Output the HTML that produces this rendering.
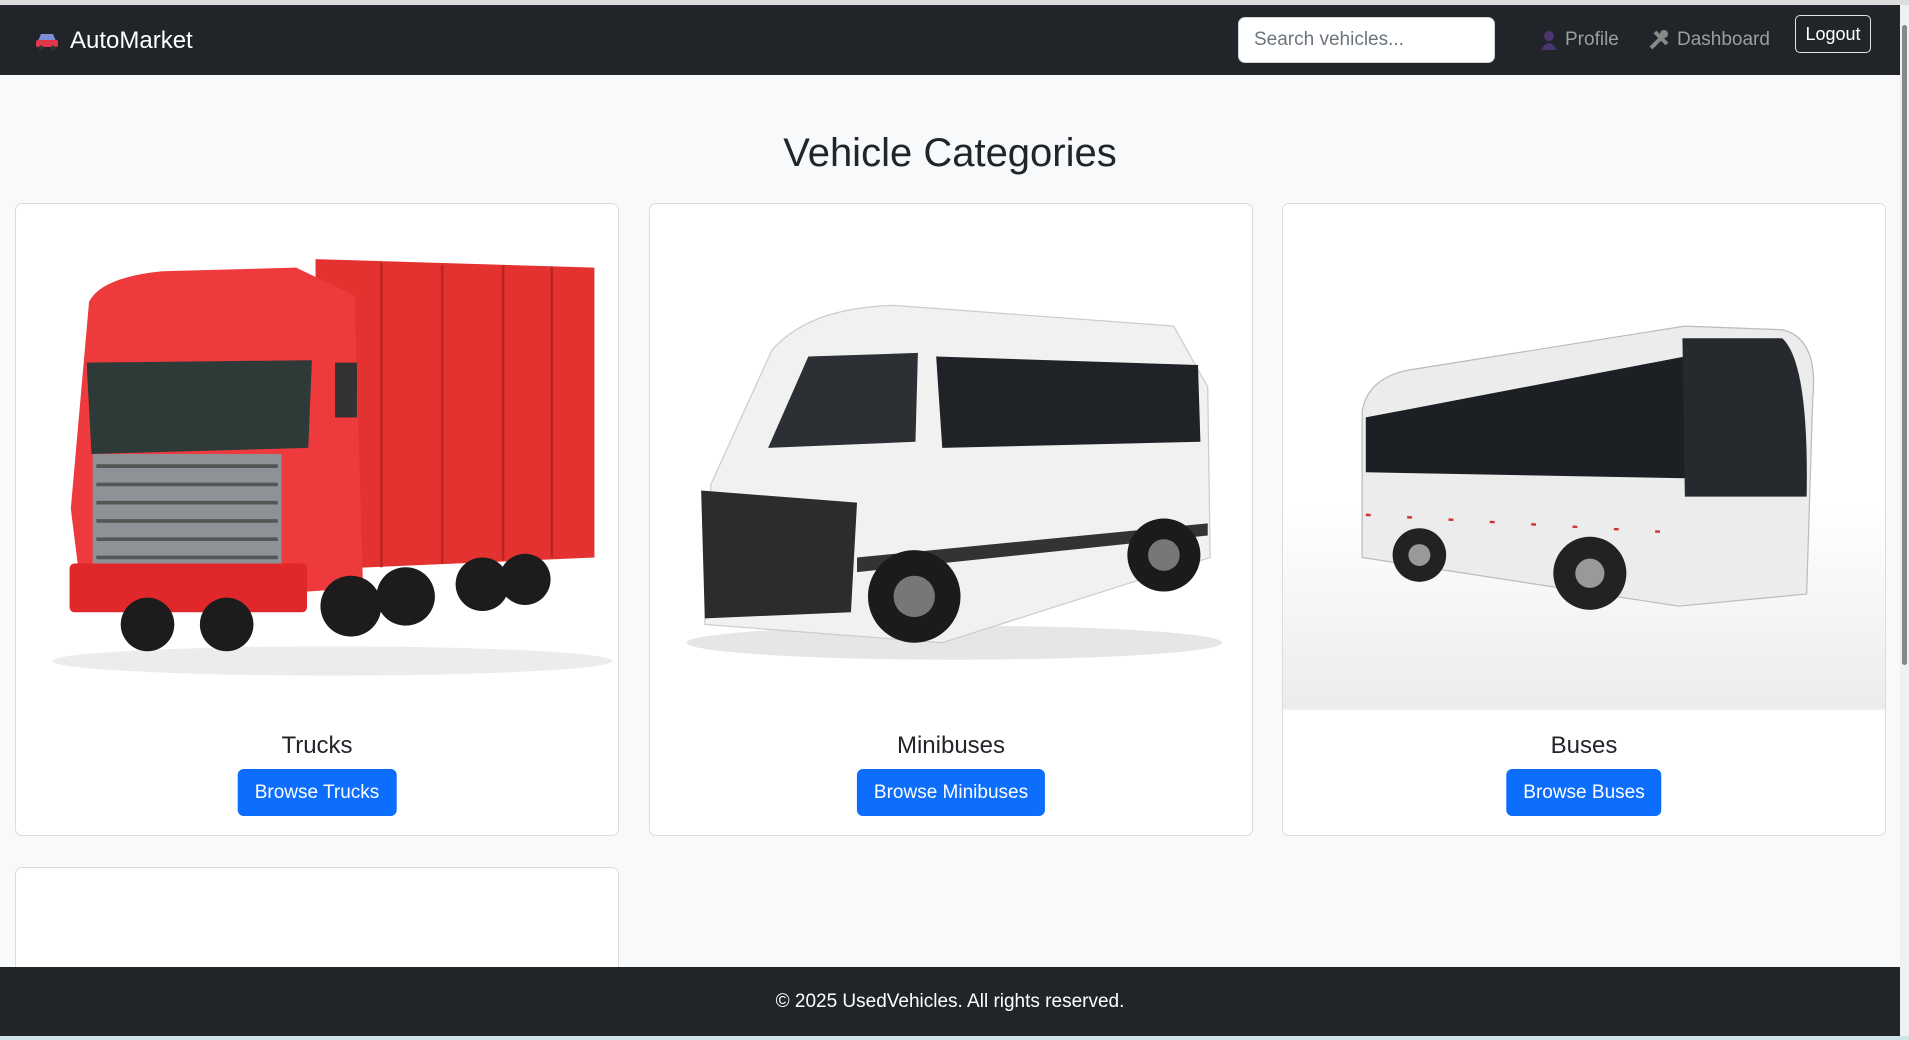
<!DOCTYPE html>
<html><head><meta charset="utf-8"><style>
*{box-sizing:border-box;margin:0;padding:0}
html,body{width:1909px;height:1040px;overflow:hidden;background:#f8f9fa;font-family:"Liberation Sans",sans-serif;color:#212529}
#wrap{position:relative;width:1909px;height:1040px;overflow:hidden}
.top{position:absolute;left:0;top:0;width:1909px;height:5px;background:#dcdcdc}
.nav{position:absolute;left:0;top:5px;width:1900px;height:70px;background:#212529}
.brand{position:absolute;left:34px;top:22px;color:#fff;font-size:24px;display:flex;align-items:center;gap:10px}
.search{position:absolute;left:1238px;top:12px;width:257px;height:46px;background:#fff;border-radius:7px;border:1px solid #ced4da;font-size:19px;color:#6c757d;padding:11px 15px}
.link{position:absolute;top:24px;color:#9a9da1;font-size:19px;display:flex;align-items:center;gap:7px}
.logout{position:absolute;left:1795px;top:10px;width:76px;height:38px;border:1px solid #dee2e6;border-radius:5px;color:#fff;font-size:18px;text-align:center;line-height:36px}
h1{position:absolute;left:0;width:1900px;top:131px;text-align:center;font-size:40px;font-weight:500}
.card{position:absolute;top:203px;width:604px;height:633px;background:#fff;border:1px solid #dadcdf;border-radius:7px;overflow:hidden}
.card svg{position:absolute;left:0;top:0}
.ct{position:absolute;top:528px;width:100%;text-align:center;font-size:24px;font-weight:500}
.btn{position:absolute;top:565px;left:50%;transform:translateX(-50%);background:#0d6efd;color:#fff;font-size:19px;height:47px;line-height:47px;padding:0 17px;border-radius:6px;white-space:nowrap}
.foot{position:absolute;left:0;top:967px;width:1900px;height:69px;background:#212529;color:#fff;font-size:19px;text-align:center;line-height:69px}
.sb{position:absolute;left:1900px;top:5px;width:9px;height:1031px;background:#f0f0f0}
.sb div{position:absolute;left:2px;top:20px;width:5px;height:640px;background:#888;border-radius:3px}
.task{position:absolute;left:0;top:1036px;width:1909px;height:4px;background:#cfe3e8}
</style></head><body><div id="wrap">
<div class="top"></div>
<div class="nav">
<div class="brand"><svg width="26" height="20" viewBox="0 0 26 20"><path d="M4 10 L7 3 H19 L22 10 Z" fill="#7b8fd6"/><rect x="2" y="9" width="22" height="7" rx="2" fill="#e2364a"/><circle cx="7" cy="17" r="2.5" fill="#333"/><circle cx="19" cy="17" r="2.5" fill="#333"/></svg>AutoMarket</div>
<div class="search">Search vehicles...</div>
<div class="link" style="left:1540px"><svg width="18" height="20" viewBox="0 0 18 20"><circle cx="9" cy="6" r="5" fill="#4a3570"/><path d="M1 20 Q9 6 17 20Z" fill="#4a3570"/></svg>Profile</div>
<div class="link" style="left:1648px"><svg width="22" height="22" viewBox="0 0 22 22"><path d="M3 19 L15 7 M7 3 L19 15" stroke="#888" stroke-width="4"/><circle cx="16" cy="5" r="4" fill="#888"/></svg>Dashboard</div>
<div class="logout">Logout</div>
</div>
<h1>Vehicle Categories</h1>

<div class="card" style="left:15px">
<svg width="604" height="506" viewBox="0 0 496 415">
<ellipse cx="260" cy="375" rx="230" ry="12" fill="#ececec"/>
<path d="M246 45 L475 52 L475 290 L246 300Z" fill="#e3322f"/>
<path d="M300 48 V298 M350 50 V295 M400 50 V292 M440 51 V290" stroke="#b82420" stroke-width="2"/>
<path d="M60 80 Q70 60 120 55 L230 52 L278 75 L285 315 L55 330 L45 250 Z" fill="#ee3a3c"/>
<path d="M58 130 L243 128 L240 200 L62 205 Z" fill="#2d3a38"/>
<rect x="63" y="205" width="155" height="95" fill="#8e9297"/>
<path d="M66 215H215M66 230H215M66 245H215M66 260H215M66 275H215M66 290H215" stroke="#555" stroke-width="3"/>
<rect x="44" y="295" width="195" height="40" rx="4" fill="#e0272a"/>
<rect x="262" y="130" width="18" height="45" fill="#333"/>
<g fill="#1c1c1c"><circle cx="108" cy="345" r="22"/><circle cx="173" cy="345" r="22"/><circle cx="275" cy="330" r="25"/><circle cx="320" cy="322" r="24"/><circle cx="383" cy="312" r="22"/><circle cx="418" cy="308" r="21"/></g>
</svg>
<div class="ct">Trucks</div><div class="btn">Browse Trucks</div></div>

<div class="card" style="left:649px">
<svg width="604" height="506" viewBox="0 0 496 415">
<ellipse cx="250" cy="360" rx="220" ry="14" fill="#e6e6e6"/>
<path d="M50 230 L100 120 Q130 85 200 83 L430 100 L458 150 L460 290 L240 360 L45 345 Z" fill="#f1f1f1" stroke="#ccc"/>
<path d="M97 200 L130 125 L220 122 L218 195 Z" fill="#2c2f33"/>
<path d="M235 125 L450 132 L452 195 L240 200 Z" fill="#1f2226"/>
<path d="M42 235 L170 245 L165 335 L45 340 Z" fill="#2a2c2e"/>
<path d="M170 290 L458 262 L458 272 L170 302Z" fill="#333"/>
<circle cx="217" cy="322" r="38" fill="#1b1b1b"/><circle cx="217" cy="322" r="17" fill="#777"/>
<circle cx="422" cy="288" r="30" fill="#1b1b1b"/><circle cx="422" cy="288" r="13" fill="#777"/>
</svg>
<div class="ct">Minibuses</div><div class="btn">Browse Minibuses</div></div>

<div class="card" style="left:1282px">
<svg width="604" height="506" viewBox="0 0 496 415">
<defs><linearGradient id="g" x1="0" y1="0" x2="0" y2="1"><stop offset="0.6" stop-color="#fff"/><stop offset="1" stop-color="#ececec"/></linearGradient></defs>
<rect width="496" height="415" fill="url(#g)"/>
<path d="M65 170 Q70 140 110 135 L330 100 L410 103 Q440 110 435 160 L430 320 L325 330 L65 290 Z" fill="#ececec" stroke="#bbb"/>
<path d="M68 175 L330 125 L330 225 L68 220 Z" fill="#1c1f24"/>
<path d="M328 110 L410 110 Q432 130 430 240 L330 240 Z" fill="#262a2e"/>
<path d="M68 255 L330 270" stroke="#c33" stroke-width="2" stroke-dasharray="4 30"/>
<circle cx="112" cy="288" r="22" fill="#222"/><circle cx="112" cy="288" r="9" fill="#999"/>
<circle cx="252" cy="303" r="30" fill="#222"/><circle cx="252" cy="303" r="12" fill="#999"/>
</svg>
<div class="ct">Buses</div><div class="btn">Browse Buses</div></div>

<div class="card" style="left:15px;top:867px;height:100px;border-bottom:none;border-radius:7px 7px 0 0"></div>

<div class="foot">© 2025 UsedVehicles. All rights reserved.</div>
<div class="sb"><div></div></div>
<div class="task"></div>
</div></body></html>
